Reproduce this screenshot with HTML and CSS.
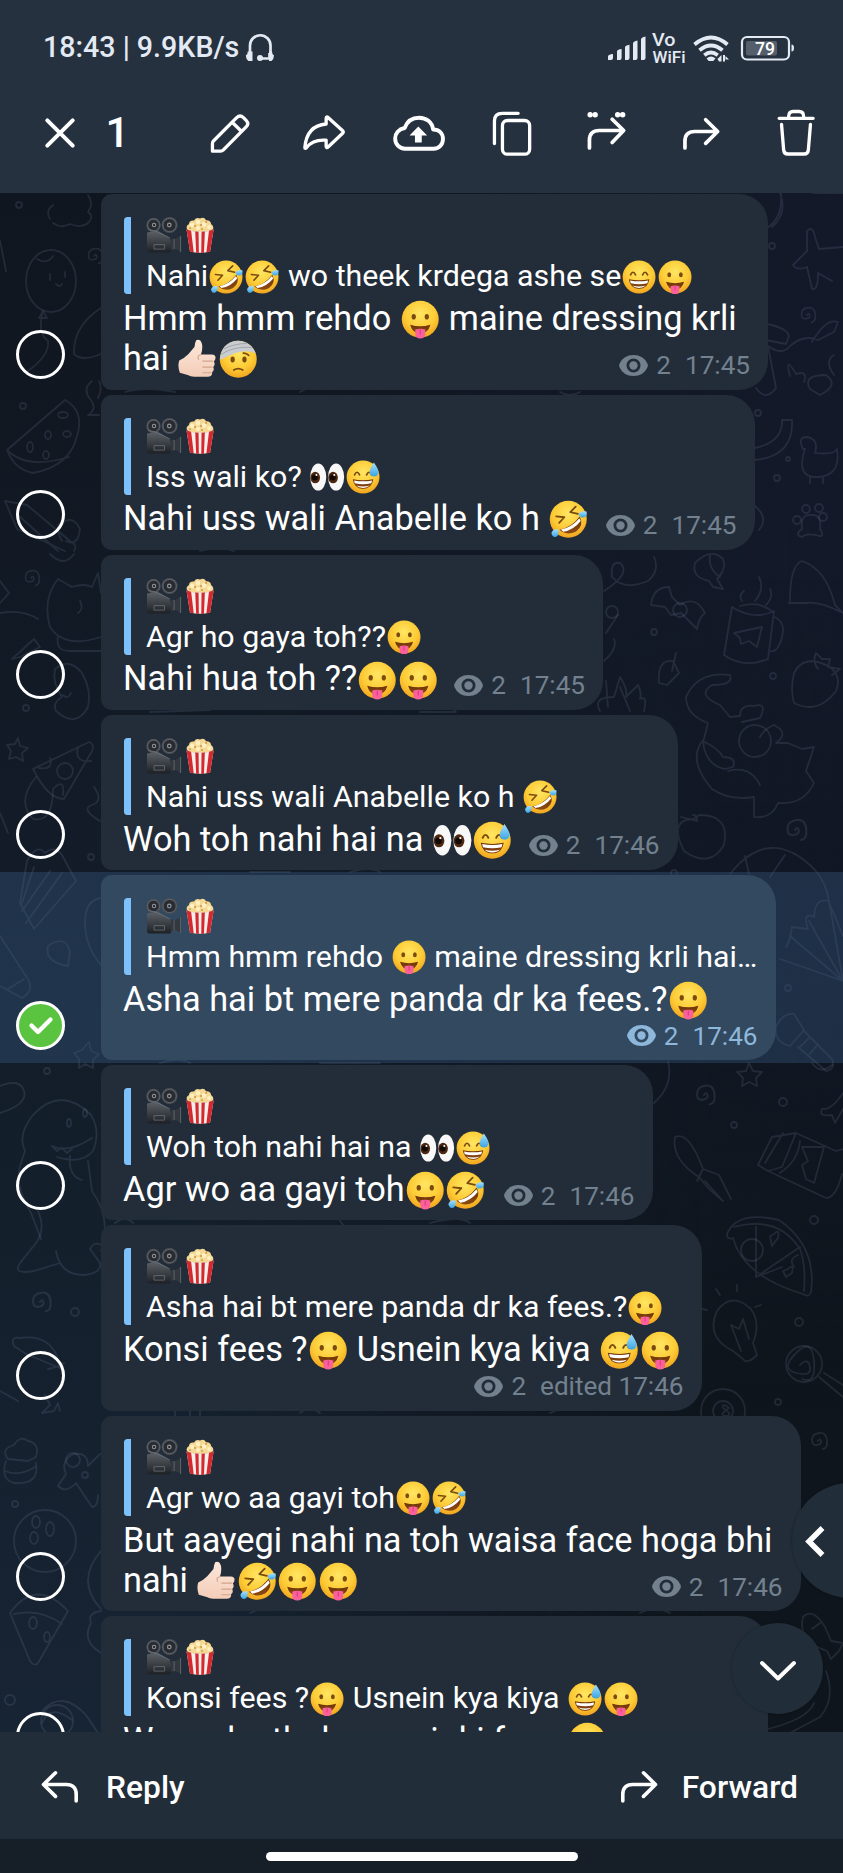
FILE: index.html
```html
<!DOCTYPE html>
<html lang="en">
<head>
<meta charset="utf-8">
<title>Chat</title>
<link rel="stylesheet" href="styles.css">
</head>
<body>
<svg class="defs" width="0" height="0" aria-hidden="true">
  <defs>
    <radialGradient id="g-face" cx=".5" cy=".35" r=".68"><stop offset="0" stop-color="#ffe663"/><stop offset=".6" stop-color="#fdcb35"/><stop offset="1" stop-color="#f0a01c"/></radialGradient>
    <linearGradient id="g-mouth" x1="0" y1="0" x2="0" y2="1"><stop offset="0" stop-color="#6b3208"/><stop offset="1" stop-color="#8d4a12"/></linearGradient>
    <linearGradient id="g-tear" x1="0" y1="0" x2="0" y2="1"><stop offset="0" stop-color="#a5e0fb"/><stop offset="1" stop-color="#3aa4e6"/></linearGradient>
    <linearGradient id="g-cam" x1="0" y1="0" x2="0" y2="1"><stop offset="0" stop-color="#5b6066"/><stop offset="1" stop-color="#1d2126"/></linearGradient>
    <linearGradient id="g-skin" x1="0" y1="0" x2="0" y2="1"><stop offset="0" stop-color="#fde7da"/><stop offset="1" stop-color="#f3cdb8"/></linearGradient>
    <symbol id="e-tongue" viewBox="0 0 36 36">
      <circle cx="18" cy="18" r="16.4" fill="url(#g-face)"/>
      <ellipse cx="12.2" cy="15.8" rx="1.9" ry="2.5" fill="#7a4a0e"/><ellipse cx="23.8" cy="15.8" rx="1.9" ry="2.5" fill="#7a4a0e"/>
      <path d="M9 22.8Q18 25.6 27 22.8Q25 30.5 18 30.5T9 22.8Z" fill="url(#g-mouth)"/>
      <path d="M13.6 27.2q4.4-1.4 8.8 0v3.6q0 4.2-4.4 4.2t-4.4-4.2z" fill="#fb5f9c"/><path d="M18 27v4.5" stroke="#d93f7c" stroke-width="1" fill="none"/>
    </symbol>
    <symbol id="e-grin" viewBox="0 0 36 36">
      <circle cx="18" cy="18" r="16.4" fill="url(#g-face)"/>
      <path d="M9.5 15.8q2.5-5.2 5 0M21.5 15.8q2.5-5.2 5 0" fill="none" stroke="#7a4a0e" stroke-width="1.7" stroke-linecap="round"/>
      <path d="M7.8 20.3Q18 22.2 28.2 20.3Q27 29.8 18 29.8T7.8 20.3Z" fill="url(#g-mouth)"/>
      <path d="M9 21.4Q18 23.2 27 21.4L26.3 24.3Q18 26 9.7 24.3Z" fill="#fff"/><path d="M11.3 26.5q6.7 1.8 13.4 0q-2.4 2.4-6.7 2.4t-6.7-2.4z" fill="#fff"/>
    </symbol>
    <symbol id="e-sweat" viewBox="0 0 36 36">
      <use href="#e-grin"/>
      <path d="M28.8 3.5q4.6 6.6 4.6 9.6a4.4 4.4 0 0 1-8.8 0q0-3 4.2-9.6z" fill="url(#g-tear)"/>
    </symbol>
    <symbol id="e-rofl" viewBox="0 0 36 36">
      <circle cx="18" cy="18" r="16.4" fill="url(#g-face)"/>
      <path d="M7.3 15.4l7.2.8-4.6 5M24.6 6.8l-4.8 4.8 6.8 1.6" fill="none" stroke="#7a4a0e" stroke-width="1.6" stroke-linecap="round" stroke-linejoin="round"/>
      <path d="M10.2 27.3Q20.5 25.6 28.2 15.6Q32.2 23.5 25 28.8Q17 33.2 10.2 27.3Z" fill="url(#g-mouth)"/>
      <path d="M11.5 27.1Q20.7 25.4 27.9 17L29.1 19.5Q22.5 27.8 13.5 29Z" fill="#fff"/>
      <path d="M27.3 13.5q1.6-3.4 7-2.3q.9 4.7-2.8 5.3q-3.4.3-4.2-3z" fill="url(#g-tear)"/><path d="M9.3 27q-5-1-6.3 3.3q1 4.4 4.3 3.2q2.8-1.6 2-6.5z" fill="url(#g-tear)"/>
    </symbol>
    <symbol id="e-eyes" viewBox="0 0 36 36">
      <ellipse cx="9.2" cy="18" rx="8" ry="13.5" fill="#f8f8f8"/><ellipse cx="27" cy="18" rx="8" ry="13.5" fill="#f8f8f8"/>
      <ellipse cx="6.2" cy="18.5" rx="4.8" ry="5.8" fill="#4c2712"/><ellipse cx="24" cy="18.5" rx="4.8" ry="5.8" fill="#4c2712"/>
      <circle cx="5.8" cy="18.5" r="3" fill="#120804"/><circle cx="23.6" cy="18.5" r="3" fill="#120804"/><circle cx="7.4" cy="16" r="1" fill="#fff"/><circle cx="25.2" cy="16" r="1" fill="#fff"/>
    </symbol>
    <symbol id="e-hurt" viewBox="0 0 36 36">
      <circle cx="18" cy="18" r="16.4" fill="url(#g-face)"/>
      <path d="M1.8 17Q4 2 18 1.6Q27.5 1.8 32 9.8L33.6 13Q22 6.8 2.5 18.5Z" fill="#c9cdd2"/>
      <path d="M2.2 14Q14 6 30 7.5M5 9Q14 4 26 4" stroke="#9ba1a8" stroke-width=".8" fill="none"/>
      <ellipse cx="13" cy="18.2" rx="1.9" ry="2.6" fill="#7a4a0e"/><ellipse cx="23.5" cy="18.2" rx="1.9" ry="2.6" fill="#7a4a0e"/>
      <path d="M22.5 12.5q2.5-.3 4.8 2M14 27.6q4-2.6 8 0" fill="none" stroke="#7a4a0e" stroke-width="1.5" stroke-linecap="round"/>
    </symbol>
    <symbol id="e-thumb" viewBox="0 0 36 36">
      <path d="M2 19q4-1.5 8-5.5l5.5-6.5q.5-4 1.5-6q4-1.5 5.2 3.5q.8 4.2-.9 9.3H31q3.400.3 3.200 3t-1.500 3q1.700 3-.5 5q1.300 3-1 4.600q.5 4-4 4.100H16q-3.500.2-6.500-1.500L2.500 30Q.3 24 2 19z" fill="url(#g-skin)"/>
      <path d="M32 19.700H22.500M31.500 25H22.500M30.500 30H22.500M21.300 14q-4 .5-2 4.500" fill="none" stroke="#d3a48c" stroke-width="1"/>
    </symbol>
    <symbol id="e-camera" viewBox="0 0 36 36">
      <circle cx="7.5" cy="8" r="7.2" fill="#4b4f55"/><circle cx="23.5" cy="8" r="8" fill="#4b4f55"/>
      <circle cx="7.5" cy="8" r="5.8" fill="#282b30" stroke="#777c83" stroke-width=".6"/><circle cx="23.5" cy="8" r="6.5" fill="#282b30" stroke="#777c83" stroke-width=".6"/>
      <circle cx="8" cy="8" r="2.2" fill="#8a9098"/><circle cx="23.2" cy="8" r="2.4" fill="#8a9098"/><circle cx="8" cy="8" r="1.1" fill="#1a1c20"/><circle cx="23.2" cy="8" r="1.1" fill="#1a1c20"/>
      <path d="M1 15.5q8-2 12-1l9 5.5q3 2 3 5v9q0 1.5-1.5 1.5H3q-2 0-2-2z" fill="url(#g-cam)"/>
      <path d="M25 21.5l4.5.5 5.5-3.5v16.5l-5.5-3-4.5 1z" fill="#33383e"/><path d="M34.5 19v16M28 22v10M8 27.5h10.5v4.5H8zM2 12l10 3 12 6" fill="none" stroke="#70777e" stroke-width=".7"/>
    </symbol>
    <symbol id="e-popcorn" viewBox="0 0 36 36">
      <path d="M5 12q-1.5-3 2-5q0-4 5-3.5Q14 0 18 1.5q4-2 6 1.8q4.5-.3 5 3.7q3 2 2 5q-1.5 3-13 3T5 12z" fill="#f4d894"/>
      <g fill="#fff0c4"><circle cx="10" cy="8" r="2.2"/><circle cx="16" cy="5" r="2.2"/><circle cx="22" cy="7.5" r="2.4"/><circle cx="27" cy="10" r="2"/><circle cx="16" cy="11" r="2"/></g>
      <g fill="#c98d35"><circle cx="13" cy="9" r=".9"/><circle cx="19" cy="8" r=".9"/><circle cx="24" cy="5" r=".9"/><circle cx="8" cy="11" r=".9"/><circle cx="20" cy="12" r=".9"/></g>
      <path d="M4.5 12.5Q18 17 31.5 12.5L28 34.5Q18 37 8 34.5z" fill="#f6efec"/>
      <path d="M4.5 12.5l4.600 1.200 2.600 21.700L8 34.500zM13.200 14.500l3.300.2.300 21.100-2.700-.2zM19.500 14.700l3.300-.3-.9 21.200-2.700.2zM26.900 13.700l4.600-1.200L28 34.500l-3.700.9z" fill="#d3292f"/>
    </symbol>
    <symbol id="i-eye" viewBox="0 0 29 21"><path fill-rule="evenodd" d="M14.5 0Q24.5 0 28.5 8.8Q29.2 10.5 28.5 12.2Q24.5 21 14.5 21T.5 12.2Q-.2 10.5.5 8.8Q4.5 0 14.5 0zM14.5 3.500a7 7 0 1 0 0 14a7 7 0 1 0 0-14z"/><circle cx="14.5" cy="10.5" r="4.2"/></symbol>
    <symbol id="i-forward" viewBox="-20 -17 40 34"><path d="M-16.2 15V8.300q0-9.800 9.800-9.800H16.500M4.500-13.200 16.500-1.500 4.500 10.400"/></symbol>
    <symbol id="d-spiral" viewBox="0 0 24 24"><path d="M12 12q2-3 3 0t-4 4-5-5 7-7 8 7-4 9"/></symbol>
  </defs>
</svg>

<div class="phone">
  <header class="top">
    <div class="status">
      <span class="status-text">18:43 | 9.9KB/s</span>
      <svg class="headset" width="30" height="29" viewBox="0 0 30 29"><path d="M5 19V12.5a9.500 9.500 0 0 1 20.500 0V19M5.500 25V20M16 25.500h8.500V20" fill="none" stroke="#e3eaf3" stroke-width="2.7"/><path d="M5.500 18.500h2v9.500H3.500Q1 26.500.8 22.500q2-1 2-4zM24 18.500h3q0 3 2 4-.2 4-2.500 5.500H24z" fill="#e3eaf3"/><circle cx="15" cy="25" r="3" fill="#e3eaf3"/></svg>
      <svg class="status-icons" width="190" height="40" viewBox="605 26 190 40" fill="#e3eaf3">
        <path d="M608 59v-3.500q0-2 5-2.500V57q0 2-2 2zM617 59V50.500q0-2 4.600-2.500v9q0 2-2 2zM625 59V46.500q0-2 4.500-2.700V57q0 2-2 2zM633 59V42.500q0-2 4.500-3V57q0 2-2 2zM641 59V38.500q0-2 4.500-3V57q0 2-2 2z"/>
        <text x="652" y="45" font-size="18" textLength="23.5" lengthAdjust="spacingAndGlyphs">Vo</text><text x="652.5" y="62" font-size="17" textLength="33" lengthAdjust="spacingAndGlyphs">WiFi</text>
        <g fill="none" stroke="#e3eaf3" stroke-width="3.8"><path d="M694.500 43.500q16.500-14 33 0"/><path d="M699.500 49.200q11.500-9.500 23 0"/><path d="M704.300 54.300q6.700-5.500 13.400 0"/></g><path d="M706.500 57.500q4.500-3.800 9 0l-2.300 2.500h-4.400zM719 60.500h2.500V54l-4 4zM723 54h2v6.500h-2zM725.500 55l3.500 3.500h-3.500z"/>
        <rect x="742" y="36" width="47" height="22.5" rx="5" fill="none" stroke="#e3eaf3" stroke-width="2.2"/><path d="M791.500 43.500q2.500 0 2.500 3.500t-2.500 3.500z"/><rect x="746" y="40" width="31" height="14.5" rx="2" fill="#555f6c"/><text x="755" y="53.5" font-size="18" textLength="20" lengthAdjust="spacingAndGlyphs" fill="#fff">79</text>
      </svg>
    </div>
    <div class="actions">
      <svg class="close" viewBox="-20 -20 40 40"><path d="M-12.700-12.700 12.700 12.700M12.700-12.700-12.700 12.700" stroke-width="4"/></svg>
      <span class="count">1</span>
      <svg class="act" viewBox="-47 -30 94 60"><path d="M-17.700 18.200V10.500q0-1.500 1-2.500L6.500-15.300q3.500-3.300 6.800 0l2.700 2.700q3.200 3.400 0 6.500L-7 17.200q-1 1-2.500 1zM2.500-10.300 11-2"/></svg>
      <svg class="act" viewBox="-47 -30 94 60"><path d="M-19.300 14.500C-18 0-11-8 2-9V-14.500q0-2.600 2.200-.8L18.500-2.200q1.300 1.200 0 2.400L4.200 13.800q-2.200 1.900-2.200-.6V7.200C-7 6.500-13 8.500-17.500 14.500q-1.800 1.800-1.800 0z"/></svg>
      <svg class="act" viewBox="-47 -30 94 60"><path stroke-width="3.9" d="M-14 15.700C-20 15.700-24 11-24 5.500-24 .5-20.500-4-14.500-5-12-12-6.500-15.300 0-15.300 7-15.300 13-11 14-3.500 20-3.500 23.800.5 23.800 6 23.800 11.500 20 15.700 14.500 15.700z"/><path class="solid" d="M-.8-6.500 8 2.500H2.600V9.500H-4.200V2.500H-9.600z"/></svg>
      <svg class="act" viewBox="-47 -30 94 60"><path d="M-18.700 10.500V-12q0-7.700 7.700-7.700H5"/><rect x="-10.7" y="-12.5" width="27.2" height="33.7" rx="5"/></svg>
      <svg class="act" viewBox="-47 -30 94 60"><path stroke-width="3.7" d="M-17.700 15V7.300q0-9.800 9.800-9.800H16M5-13.800 16.500-2.500 5 9.500"/><g class="solid"><circle cx="-17" cy="-18.3" r="2.7"/><circle cx="-12" cy="-18.3" r="2.7"/><circle cx="10.5" cy="-18.3" r="2.7"/><circle cx="15.5" cy="-18.3" r="2.7"/></g></svg>
      <svg class="act" viewBox="-47 -30 94 60"><path stroke-width="3.7" d="M-16.200 15V8.300q0-9.800 9.800-9.800H16.500M4.500-13.200 16.500-1.500 4.500 10.400"/></svg>
      <svg class="act" viewBox="-47 -30 94 60"><path d="M-17-14.700H17M-7.500-16.500q0-5 4.500-5H3q4.500 0 4.500 5M-14.600-8.500-12.500 17q.4 4 4.200 4H8q3.800 0 4.200-4L14.300-8.500"/></svg>
    </div>
  </header>

  <main class="chat">
    <svg class="wallpaper" viewBox="0 192 843 1540" aria-hidden="true">
      <path d="M50 218q-5-8 3-14M53 222q8 6 17 1q12 5 19-2q5-6-1-10q6-8 0-17"/>
      <ellipse cx="51" cy="280" rx="25" ry="31"/><path d="M37 258q10 6 16-3M50 273v6M65 271v5M56 283q4 4 6 0M43 310l-4 7 8 0-4-7q-6 22 5 30q2 14-20 30"/><path d="M101 307q-28 18-27 46q8 8 27 0M0 240l6 30M92 380q-10 8-2 18t-2 16h11M99 380q4 8-1 17"/>
      <path d="M65 399Q85 410 77 435Q70 465 33 472Q14 468 7 449ZM7 449q20 20 62 7"/><ellipse cx="63" cy="414" rx="5" ry="3"/><ellipse cx="48" cy="434" rx="3" ry="4"/><ellipse cx="67" cy="433" rx="4" ry="3"/><ellipse cx="30" cy="446" rx="3" ry="5"/><ellipse cx="46" cy="454" rx="3" ry="4"/>
      <path d="M62 540q-10-18 4-20q8-4 14 8q-2 18-14 12M5 500l12 28 48 22M5 500l22 4 43 36q8 4 4 10M18 514l40 36"/><path d="M50 553q14 14 24 0"/>
      <path d="M50 626q-8-28 8-48l14 8q12-4 20 0l6-14 3 20M50 626q14 22 51 10M58 636q-3 14 12 14h31M80 600q4 8-2 12M0 612q22-4 38 6M0 580l9 12-9 10M12 658l22-20 6 8-20 10z"/>
      <path d="M55 668q14-12 27 4q10 18 6 34q-12 22-32 4q-4-8 6-14q-10-14-7-28zM63 694q5 5 8-2"/><path d="M18 737l2 8 8 2-6 5 1 8-7-4-7 2 2-8-4-6 8-1z"/>
      <path d="M33 768l56-27q6 2 3 9L64 798q-16 0-31-30zM50 757q4 12-11 10M78 746q-4 16 13 14"/><circle cx="65" cy="770" r="8"/><path d="M36 776q-20 24-3 42q20 4 20-30q12-12 10 6M94 786q10 14-2 18t8 16M0 812l8 20"/><path d="M27 860q10-18 18-8 10-8 17 2l14 26-42 48-14-26z M34 866L22 902M50 870l-28 40M62 872l-36 50"/>
      <path d="M0 935l26 40q10 14-4 22L0 985M24 978l-16 10M48 945q18-12 22 6l-2 14q-24-4-20-20zM101 897q-16 2-16 25t16 42"/><path d="M89 1041l2 9 8 3-6 6 0 8-8-4-6 4 0-9-5-6 8-3z"/>
      <path d="M0 1085q20-8 24 5t-24 22M25 1150q-8-16 8-36 28-30 58 0 10 16 2 36-12 14-36 6M52 1145q16 8 40-8M52 1145l5 5 5-3 5 5 5-4M25 1150l-4 12q-8 20 10 50l10 26M70 1155q-2 20 12 24M88 1160l4 30q20 28 9 60"/><ellipse cx="69" cy="1122" rx="2" ry="4"/><ellipse cx="85" cy="1112" rx="2" ry="4"/><path d="M38 1210q8 18-2 32L20 1262q-8 12 14 8l26-8M56 1250q4 24 28 24 18-2 16-12l-10-14q4-8 11-4"/>
      <path d="M14 1345q-4-10 6-8 26-4 36 16l4 14-34-14zM48 1368q10-2 16-6M45 1394l5 10-8 8 12-2 4-8 2 8M0 1390l18 10"/><path d="M8 1458q-8-10 6-14 6-10 14-4 12 2 8 16l-8 4-20-2zM6 1460q-6 18 8 22 26 2 22-20M5 1470q14 6 30-4"/>
      <path d="M66 1473q-6-14 8-20 14-2 14 12l12-12M66 1473l-8 12q8 8 18-3l16 24q6 0 6-12"/><circle cx="73" cy="1459" r="7"/><circle cx="85" cy="1474" r="3"/>
      <circle cx="45" cy="1540" r="31"/><ellipse cx="36" cy="1521" rx="4" ry="6"/><ellipse cx="50" cy="1528" rx="4" ry="7"/><ellipse cx="34" cy="1537" rx="4" ry="6"/><path d="M10 1612q26-36 58-2l-30 52q-4 4-8-2zM14 1613q26-6 48 10M101 1550q-26 30 0 58"/><ellipse cx="33" cy="1622" rx="4" ry="6"/><ellipse cx="47" cy="1636" rx="3" ry="5"/>
      <path d="M101 1610q-14 2-10 12-10 18 10 30M42 1710q20-22 44 4l12 18M42 1722q8-20 30-3"/><circle cx="57" cy="1720" r="16"/>
      <path d="M767 227q16-10 14-35M780 192q8 20-8 34M807 230q6-6 8 6l4 12 24-2M807 230v20l-14 14q4 6 14 2l5 22q6 2 6-16l14 8M813 192h30"/><path d="M767 323q20 4 22 12l-3 8-20-4M768 345q14 10 22 0 14-12 28-6l16-8 4-10q-12-4-26 20M768 345l8 42q-10 14-20 0M790 375q-6-22 6-2 12-4 8 8M810 388q-8-14 16-14 14 10-6 20zM834 374q-10-14 0-20"/>
      <path d="M755 447q28-6 27-28h10q2 36-37 40M803 448q-6-12 4-12 12 2 8 16 20 2 22-4 4 26-18 28-24 2-14-28zM810 476v6M823 476v6"/><path d="M802 528q-2-16 10-14 10 0 8 14 6 10-4 6-10-2-14 2-8-2 0-8z"/><circle cx="797" cy="519" r="4"/><circle cx="806" cy="508" r="4"/><circle cx="819" cy="507" r="4"/><circle cx="823" cy="516" r="4"/><path d="M755 505q14 12 4 24"/>
      <path d="M604 590q28-18 16-28-10-2-8 14 12 14 36 4 12-10 6-24M695 562q16-16 28-4 4 10-6 20l6 10-10-2-4-6q-18-4-14-18zM710 554q-2 14 10 22"/><path d="M651 604q2-18 18-18l3 10 8 8q16-10 25 8-6 4-8 16l-16-16-10 2-6-8z"/><circle cx="680" cy="609" r="7"/>
      <path d="M732 606q22 14 42 4l-6 48q-24 10-44-4zM740 605q20-6 34 7M774 616q12 4 8 20t-12 14M734 632l28-6-5 20-8-6-8 3-1-6zM742 600q-4-6 2-10M755 600q10-12 4-24M766 604q8-8 4-16"/>
      <path d="M790 600q0-36 12-40 24 8 33 44l8 8q-24-12-36-10l-18 0"/><path d="M794 672q10-20 36-6 12 10 6 24-18 24-42 12-4-14 0-30zM818 668q-6-8-2-16l6 6 8 0-2 8 12 2-8 6M659 682q-2-24 14-22l6 12-12 12zM676 652l-4 18M604 660q14-12 10-22M606 632l12-18"/><circle cx="612" cy="611" r="6"/>
      <path d="M600 710q-8-14 14-14l6-20q8 12 6 20l12-12q4 8 2 14 8-4 4 12M630 710l-10-24M608 706l-2-26M730 674q-32-4-44 22 0 18 22 26l-4 16q-18 20 8 50 18 12 42 8l0 20q18 2 24-14 26 2 36-20l-8-12 8-24-12 2-14-6-12 0q14-10-2-18-10 4-14 12M730 674q4 10-18 10-16 10 8 20l10 12 10-1q0-12 14-10 14-4 6 12l-18 4M703 740q16 8 20 16 14 0 10 10l-8 2q-20-4-22-28zM728 770q22-6 32 14"/><circle cx="755" cy="740" r="16"/>
      <path d="M694 818q-26 0-10 32 26 18 40-6 6-30-24-30-2 0-6 4zM681 816l16 4q0-6-4-6M730 873q40-50 85-4 12 14 14 32l14 34M745 855l4 18M785 854l-15 22M829 900q-14-4-15 16-12-6-6 12l-16-2q-2 14-6 20M829 900l14 80M809 920l34 60M780 958l63 22M790 935l53 45"/><path d="M776 1026q6-14 18-13l10 16-14 16q-16-4-14-19zM804 1030l28 28q4 10-6 12l-28-24M810 1036l-10 10M818 1043l-10 12"/>
      <path d="M654 1102q20-18 14-42M749 1062l4 8 9 1-6 6 1 8-8-4-7 4 1-8-6-6 9-1zM675 1136q14-6 28 32l16 6 12 24M675 1136q-4 22 24 40l10 12 14 12M703 1168l-6 12M705 1180l18 20M812 1062q8 12 20 2M843 1092q-12 18-21 16-4 8 10 6l3 8 8-14"/>
      <path d="M772 1136l24-4 40 18 7-2M772 1136l-14 28 10 6 58 27q10 0 16-24M796 1132l-14 34-14 4M800 1140q-2 20-20 32M765 1162l18-30M802 1146h22l-10 36-8-4-4-14 6-4z"/>
      <path d="M727 1233q10-24 52-14 38 26 32 72-2 6-8 2-60-18-70-56-6 2-6-4zM734 1226q44-12 66 22 6 16 4 42M756 1226v50l44-30M756 1276l26-10"/><circle cx="752" cy="1249" r="11"/><path d="M774 1233q6-6 4 4l-6 8-2-10zM788 1268q6-6 4 4l-6 4-3-6zM798 1254q-10 4-4 12"/>
      <path d="M733 1350q-28-14-16-40 14-20 34-2 10 14 2 34l4 12q-10 10-14 4zM731 1324l10 26M731 1324l8 4 4-10 6 20M720 1294l-4-6M737 1290v-6M755 1306l6-2M702 1308l5 1"/><circle cx="804" cy="1363" r="18"/><path d="M819 1376l24 20M824 1372l19 12M800 1364q8-8 10 2t-14 6 0-20 18 8-12 18"/><circle cx="723" cy="1410" r="22"/><circle cx="723" cy="1410" r="10"/><path d="M729 1407q-8-6-6 0 10 6 4 8-10 0 2-8z"/>
      <path d="M803 1616q10-10 22 10l6 14 12 2-4 8-8 8-4-8q-30-10-24-34zM812 1628l8-6M826 1670q10 28-6 46l-30 16M768 1728q40-10 46-26"/>
      <path d="M125 391q20-6 50 0M300 391l8-4M560 391q10 6 20 0M200 550q20-6 34 0M420 711h36l-4-4M150 711l60-2M250 871h40M350 871q20-6 30 0M160 1062q20-6 30 0M320 1062h60M115 1222q10-8 18 0M340 1220l4 5M430 1222q30-8 40 0M300 1412q10-8 20 0M175 1410v5M190 1410v5M200 1410v5M550 1412l10-4M250 1612l10-4M640 1612q14-8 30 0"/>
      <g><circle cx="19" cy="204" r="3"/><circle cx="23" cy="405" r="3"/><circle cx="26" cy="707" r="3"/><circle cx="91" cy="856" r="3"/><circle cx="47" cy="1070" r="3"/><circle cx="75" cy="1311" r="4"/><circle cx="15" cy="1503" r="3"/><circle cx="10" cy="1699" r="5"/><circle cx="772" cy="245" r="3"/><circle cx="758" cy="412" r="3"/><circle cx="788" cy="458" r="2"/><circle cx="777" cy="477" r="3"/><circle cx="654" cy="631" r="3"/><circle cx="773" cy="675" r="3"/><circle cx="674" cy="872" r="3"/><circle cx="788" cy="987" r="3"/><circle cx="783" cy="1101" r="4"/><circle cx="734" cy="1124" r="3"/><circle cx="814" cy="1219" r="4"/><circle cx="799" cy="1321" r="4"/><circle cx="778" cy="1401" r="3"/></g>
      <use href="#d-spiral" x="83" y="244" width="22" height="22"/><use href="#d-spiral" x="20" y="566" width="22" height="22"/><use href="#d-spiral" x="796" y="303" width="22" height="22"/><use href="#d-spiral" x="780" y="814" width="30" height="30"/><use href="#d-spiral" x="690" y="1080" width="28" height="28"/><use href="#d-spiral" x="26" y="1287" width="28" height="28"/><use href="#d-spiral" x="806" y="1428" width="24" height="24"/>
    </svg>

    <div class="thread">
      <article class="row tall">
        <div class="pick"><span class="ring"></span></div>
        <div class="bubble w1">
          <blockquote class="quote"><div class="who"><svg class="emoji"><use href="#e-camera"/></svg><svg class="emoji"><use href="#e-popcorn"/></svg></div><div class="said">Nahi<svg class="emoji"><use href="#e-rofl"/></svg><svg class="emoji"><use href="#e-rofl"/></svg> wo theek krdega ashe se<svg class="emoji"><use href="#e-grin"/></svg><svg class="emoji"><use href="#e-tongue"/></svg></div></blockquote>
          <div class="body"><p class="text">Hmm hmm rehdo <svg class="emoji"><use href="#e-tongue"/></svg> maine dressing krli<br>hai <svg class="emoji"><use href="#e-thumb"/></svg><svg class="emoji"><use href="#e-hurt"/></svg></p><div class="meta"><svg class="eye"><use href="#i-eye"/></svg><span>2</span><time>17:45</time></div></div>
        </div>
      </article>
      <article class="row">
        <div class="pick"><span class="ring"></span></div>
        <div class="bubble w2">
          <blockquote class="quote"><div class="who"><svg class="emoji"><use href="#e-camera"/></svg><svg class="emoji"><use href="#e-popcorn"/></svg></div><div class="said">Iss wali ko? <svg class="emoji"><use href="#e-eyes"/></svg><svg class="emoji"><use href="#e-sweat"/></svg></div></blockquote>
          <div class="body"><p class="text">Nahi uss wali Anabelle ko h <svg class="emoji"><use href="#e-rofl"/></svg></p><div class="meta"><svg class="eye"><use href="#i-eye"/></svg><span>2</span><time>17:45</time></div></div>
        </div>
      </article>
      <article class="row">
        <div class="pick"><span class="ring"></span></div>
        <div class="bubble w3">
          <blockquote class="quote"><div class="who"><svg class="emoji"><use href="#e-camera"/></svg><svg class="emoji"><use href="#e-popcorn"/></svg></div><div class="said">Agr ho gaya toh??<svg class="emoji"><use href="#e-tongue"/></svg></div></blockquote>
          <div class="body"><p class="text">Nahi hua toh ??<svg class="emoji"><use href="#e-tongue"/></svg><svg class="emoji"><use href="#e-tongue"/></svg></p><div class="meta"><svg class="eye"><use href="#i-eye"/></svg><span>2</span><time>17:45</time></div></div>
        </div>
      </article>
      <article class="row">
        <div class="pick"><span class="ring"></span></div>
        <div class="bubble w4">
          <blockquote class="quote"><div class="who"><svg class="emoji"><use href="#e-camera"/></svg><svg class="emoji"><use href="#e-popcorn"/></svg></div><div class="said">Nahi uss wali Anabelle ko h <svg class="emoji"><use href="#e-rofl"/></svg></div></blockquote>
          <div class="body"><p class="text">Woh toh nahi hai na <svg class="emoji"><use href="#e-eyes"/></svg><svg class="emoji"><use href="#e-sweat"/></svg></p><div class="meta"><svg class="eye"><use href="#i-eye"/></svg><span>2</span><time>17:46</time></div></div>
        </div>
      </article>
      <article class="row mid selected">
        <div class="pick"><span class="ring"><svg viewBox="0 0 48 48"><path d="M14.500 25.500 21 32 33.500 19.500"/></svg></span></div>
        <div class="bubble w5">
          <blockquote class="quote"><div class="who"><svg class="emoji"><use href="#e-camera"/></svg><svg class="emoji"><use href="#e-popcorn"/></svg></div><div class="said">Hmm hmm rehdo <svg class="emoji"><use href="#e-tongue"/></svg> maine dressing krli hai…</div></blockquote>
          <div class="body"><p class="text">Asha hai bt mere panda dr ka fees.?<svg class="emoji"><use href="#e-tongue"/></svg></p><div class="meta"><svg class="eye"><use href="#i-eye"/></svg><span>2</span><time>17:46</time></div></div>
        </div>
      </article>
      <article class="row">
        <div class="pick"><span class="ring"></span></div>
        <div class="bubble w6">
          <blockquote class="quote"><div class="who"><svg class="emoji"><use href="#e-camera"/></svg><svg class="emoji"><use href="#e-popcorn"/></svg></div><div class="said">Woh toh nahi hai na <svg class="emoji"><use href="#e-eyes"/></svg><svg class="emoji"><use href="#e-sweat"/></svg></div></blockquote>
          <div class="body"><p class="text">Agr wo aa gayi toh<svg class="emoji"><use href="#e-tongue"/></svg><svg class="emoji"><use href="#e-rofl"/></svg></p><div class="meta"><svg class="eye"><use href="#i-eye"/></svg><span>2</span><time>17:46</time></div></div>
        </div>
      </article>
      <article class="row mid">
        <div class="pick"><span class="ring"></span></div>
        <div class="bubble w7">
          <blockquote class="quote"><div class="who"><svg class="emoji"><use href="#e-camera"/></svg><svg class="emoji"><use href="#e-popcorn"/></svg></div><div class="said">Asha hai bt mere panda dr ka fees.?<svg class="emoji"><use href="#e-tongue"/></svg></div></blockquote>
          <div class="body"><p class="text">Konsi fees ?<svg class="emoji"><use href="#e-tongue"/></svg> Usnein kya kiya <svg class="emoji"><use href="#e-sweat"/></svg><svg class="emoji"><use href="#e-tongue"/></svg></p><div class="meta"><svg class="eye"><use href="#i-eye"/></svg><span>2</span><time>edited 17:46</time></div></div>
        </div>
      </article>
      <article class="row tall">
        <div class="pick"><span class="ring"></span></div>
        <div class="bubble w8">
          <blockquote class="quote"><div class="who"><svg class="emoji"><use href="#e-camera"/></svg><svg class="emoji"><use href="#e-popcorn"/></svg></div><div class="said">Agr wo aa gayi toh<svg class="emoji"><use href="#e-tongue"/></svg><svg class="emoji"><use href="#e-rofl"/></svg></div></blockquote>
          <div class="body"><p class="text">But aayegi nahi na toh waisa face hoga bhi<br>nahi <svg class="emoji"><use href="#e-thumb"/></svg><svg class="emoji"><use href="#e-rofl"/></svg><svg class="emoji"><use href="#e-tongue"/></svg><svg class="emoji"><use href="#e-tongue"/></svg></p><div class="meta"><svg class="eye"><use href="#i-eye"/></svg><span>2</span><time>17:46</time></div></div>
        </div>
      </article>
      <article class="row">
        <div class="pick"><span class="ring"></span></div>
        <div class="bubble w1">
          <blockquote class="quote"><div class="who"><svg class="emoji"><use href="#e-camera"/></svg><svg class="emoji"><use href="#e-popcorn"/></svg></div><div class="said">Konsi fees ?<svg class="emoji"><use href="#e-tongue"/></svg> Usnein kya kiya <svg class="emoji"><use href="#e-sweat"/></svg><svg class="emoji"><use href="#e-tongue"/></svg></div></blockquote>
          <div class="body"><p class="text">Wo an ka thok aap sir ki fees <svg class="emoji"><use href="#e-tongue"/></svg></p></div>
        </div>
      </article>
    </div>

    <button class="side" aria-label="Open"><svg width="24" height="34" viewBox="0 0 24 34"><path d="M18.500 4 5 17.500 18.500 31"/></svg></button>
    <button class="down" aria-label="Scroll down"><svg width="40" height="24" viewBox="0 0 40 24"><path d="M4 4 20 19.500 36 4"/></svg></button>
  </main>

  <footer class="bottom">
    <button class="reply"><svg class="arrow flip"><use href="#i-forward"/></svg><span>Reply</span></button>
    <button class="forward"><svg class="arrow"><use href="#i-forward"/></svg><span>Forward</span></button>
  </footer>
  <div class="nav"><span class="pill"></span></div>
</div>
</body>
</html>
```

FILE: styles.css
```css
* { box-sizing: border-box; }
body { margin: 0; background: #161e28; font-family: Roboto, "Noto Sans", sans-serif; color: #fff; }
.defs { position: absolute; }
.phone { width: 843px; height: 1873px; display: flex; flex-direction: column; overflow: hidden; }
button { border: 0; padding: 0; background: none; color: inherit; font: inherit; }

.top { height: 192.5px; background: #26313f; flex: none; display: flex; flex-direction: column; position: relative; z-index: 2; }
.status { height: 93px; display: flex; align-items: center; padding: 1px 48px 0 43px; }
.status-text { font-size: 28.6px; font-weight: 500; color: #e3eaf3; white-space: nowrap; }
.headset { margin-left: 6px; }
.status-icons { margin-left: auto; font-weight: 500; }
.actions { height: 80px; display: flex; align-items: center; padding-left: 39.5px; }
.actions svg { fill: none; stroke: #fff; stroke-width: 3.3; stroke-linecap: round; stroke-linejoin: round; flex: none; }
.actions .solid { fill: #fff; stroke: none; }
.close { width: 40px; height: 40px; }
.count { width: 80px; margin-left: 26px; font-size: 42px; line-height: 48px; font-weight: 500; }
.act { width: 94.3px; height: 60px; }

.chat { flex: 1; min-height: 0; position: relative; overflow: hidden; background: linear-gradient(to right, rgba(17, 24, 36, 0) 35%, #131929 100%), linear-gradient(#10161f, #121b27 40%, #172433); }
.chat::before { content: ""; position: absolute; inset: 0; background: linear-gradient(to bottom, rgba(14, 21, 28, 0) 25%, #0e151c 80%); mask-image: linear-gradient(to right, transparent 20%, #000 85%); }
.wallpaper { position: absolute; left: 0; top: 0; width: 843px; height: 1540px; fill: none; stroke: #9fb4d8; stroke-opacity: .13; stroke-width: 1.8; stroke-linejoin: round; stroke-linecap: round; }
.thread { position: relative; margin-top: -1px; }

.row { height: 160.1px; padding: 2.5px 0; display: flex; }
.row.mid { height: 190.4px; }
.row.tall { height: 200.5px; }
.row.selected { background: rgba(60, 98, 140, .34); }
.pick { width: 101px; padding: 0 0 10.5px 16px; display: flex; align-items: flex-end; flex: none; }
.ring { width: 49px; height: 49px; border: 3px solid #fff; border-radius: 50%; }
.selected .ring { background: #5ac440; }
.ring svg { display: block; margin: -3.5px -2.5px; width: 48px; height: 48px; fill: none; stroke: #fff; stroke-width: 4.3; stroke-linecap: round; stroke-linejoin: round; }

.bubble { background: #222d39; border-radius: 11px 29px 29px 11px; padding: 23px 18px 9.5px 23px; display: flex; flex-direction: column; white-space: nowrap; }
.selected .bubble { background: #32495f; }
.w1 { width: 667px; }
.w2 { width: 653.5px; }
.w3 { width: 502px; }
.w4 { width: 576.5px; }
.w5 { width: 674.5px; }
.w6 { width: 551.5px; }
.w7 { width: 600.5px; }
.w8 { width: 699.5px; }

.quote { margin: 0; height: 77px; display: flex; flex-direction: column; padding-left: 22px; font-size: 30.35px; background: linear-gradient(#7cc1fb, #7cc1fb) left / 7px 100% no-repeat; border-radius: 3.5px; flex: none; }
.who { height: 40px; display: flex; }
.said { line-height: 37px; }
.emoji { width: 1.19em; height: 1.19em; margin: -.2em 0; vertical-align: -.09em; }
.text .emoji { width: 1.18em; height: 1.18em; vertical-align: -.08em; }
.who .emoji { margin: 0; }
.body { flex: 1; display: grid; padding-top: 3.9px; margin-left: -1px; }
.text { grid-area: 1 / 1; margin: 0; height: 0; font-size: 34.35px; line-height: 40.5px; }
.meta { grid-area: 1 / 1; align-self: end; justify-self: end; display: flex; align-items: center; font-size: 26.1px; line-height: 30px; color: #73818f; }
.selected .meta { color: #8eb7dc; }
.eye { width: 29px; height: 21px; fill: currentColor; margin-right: 8px; }
.meta time { margin-left: 14px; }

.side { position: absolute; left: 791.5px; top: 1290px; width: 115px; height: 115px; border-radius: 50%; background: #222d3a; box-shadow: 0 0 3px rgba(0, 0, 0, .3); }
.side svg { position: absolute; left: 12px; top: 41px; fill: none; stroke: #fff; stroke-width: 5.5; }
.down { position: absolute; left: 732px; top: 1430px; width: 91px; height: 91px; border-radius: 50%; background: #222d3a; box-shadow: 0 0 3px rgba(0, 0, 0, .25); display: grid; place-items: center; padding-top: 5px; }
.down svg { fill: none; stroke: #fff; stroke-width: 3.9; stroke-linecap: round; stroke-linejoin: round; }

.bottom { height: 106.5px; flex: none; background: #222d3a; display: flex; justify-content: space-between; padding: 3px 45px 0 40px; font-size: 31.8px; font-weight: 500; position: relative; }
.bottom button { display: flex; align-items: center; }
.arrow { width: 40px; height: 34px; margin-bottom: 2px; fill: none; stroke: #fff; stroke-width: 3.6; stroke-linecap: round; stroke-linejoin: round; }
.arrow.flip { transform: scaleX(-1); }
.bottom .reply span { margin-left: 26px; }
.bottom .forward span { margin-left: 23px; }
.nav { height: 34.5px; flex: none; background: #161e28; display: flex; justify-content: center; padding-top: 13px; }
.pill { width: 312px; height: 9px; border-radius: 5px; background: #fff; }
```
